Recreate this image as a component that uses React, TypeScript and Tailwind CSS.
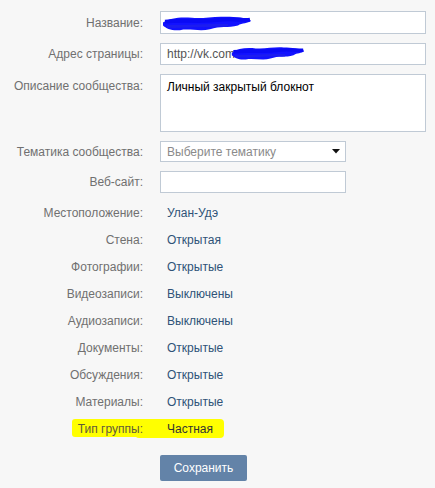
import React from 'react';

const Scribble: React.FC<{ className?: string }> = ({ className }) => (
  <svg className={className} viewBox="0 0 90 20" preserveAspectRatio="none">
    <path
      d="M1 9 C8 4, 18 3, 30 4 C42 5, 52 2, 64 3 C74 3, 84 4, 89 7 C86 10, 80 9, 76 12 C66 15, 58 12, 48 16 C38 19, 28 15, 18 17 C10 18, 4 15, 1 12 Z"
      fill="#1212ff"
    />
    <path d="M3 8 C20 6, 40 9, 60 6 C72 5, 82 7, 88 6" stroke="#0a0af5" strokeWidth="4" fill="none" />
    <path d="M5 13 C24 14, 44 11, 66 12" stroke="#1c1cf0" strokeWidth="3" fill="none" />
  </svg>
);

const infoRows: { label: string; value: string }[] = [
  { label: 'Местоположение:', value: 'Улан-Удэ' },
  { label: 'Стена:', value: 'Открытая' },
  { label: 'Фотографии:', value: 'Открытые' },
  { label: 'Видеозаписи:', value: 'Выключены' },
  { label: 'Аудиозаписи:', value: 'Выключены' },
  { label: 'Документы:', value: 'Открытые' },
  { label: 'Обсуждения:', value: 'Открытые' },
  { label: 'Материалы:', value: 'Открытые' },
];

const App: React.FC = () => {
  return (
    <div
      className="min-h-[488px] w-[435px] bg-[#f7f7f7] pt-[11px] text-[12px] leading-[14px]"
      style={{ fontFamily: '"Liberation Sans", Arial, sans-serif' }}
    >
      {/* form fields */}
      <div className="flex flex-col gap-[9px]">
        <div className="flex items-center">
          <div className="w-[143px] shrink-0 text-right text-[#707070]">Название:</div>
          <div className="relative ml-[17px] h-[23px] w-[266px] border border-[#c0cad5] bg-white">
            <Scribble className="absolute left-[1px] top-[2px] h-[19px] w-[90px]" />
          </div>
        </div>

        <div className="flex items-center">
          <div className="w-[143px] shrink-0 text-right text-[#707070]">Адрес страницы:</div>
          <div className="relative ml-[17px] flex h-[22px] w-[266px] items-center border border-[#c0cad5] bg-white pl-[6px] text-[#555]">
            http://vk.com
            <Scribble className="absolute left-[70px] top-[1px] h-[17px] w-[74px]" />
          </div>
        </div>

        <div className="flex items-start">
          <div className="w-[143px] shrink-0 pt-[5px] text-right text-[#707070]">Описание сообщества:</div>
          <div className="ml-[17px] h-[58px] w-[266px] border border-[#c0cad5] bg-white pl-[6px] pt-[5px] text-black">
            Личный закрытый блокнот
          </div>
        </div>

        <div className="flex items-center">
          <div className="w-[143px] shrink-0 text-right text-[#707070]">Тематика сообщества:</div>
          <div className="ml-[17px] flex h-[21px] w-[186px] items-center justify-between border border-[#c0cad5] bg-white pl-[6px] pr-[5px] text-[#8a8a8a]">
            <span>Выберите тематику</span>
            <svg width="8" height="5" viewBox="0 0 8 5">
              <path d="M0 0 H8 L4 4.5 Z" fill="#111" />
            </svg>
          </div>
        </div>

        <div className="flex items-center">
          <div className="w-[143px] shrink-0 text-right text-[#707070]">Веб-сайт:</div>
          <div className="ml-[17px] h-[22px] w-[186px] border border-[#c0cad5] bg-white" />
        </div>
      </div>

      {/* info rows */}
      <div className="mt-[6px] flex flex-col">
        {infoRows.map((r) => (
          <div key={r.label} className="flex h-[27px] items-center">
            <div className="w-[143px] shrink-0 text-right text-[#707070]">{r.label}</div>
            <div className="ml-[24px] text-[#2f5378]">{r.value}</div>
          </div>
        ))}
        <div className="relative flex h-[27px] items-center">
          <div className="absolute left-[72px] top-[4px] h-[18px] w-[80px] rounded-[3px] bg-[#ffff00]" />
          <div className="absolute left-[135px] top-[4px] h-[19px] w-[89px] rounded-[4px] bg-[#ffff00]" />
          <div className="relative w-[143px] shrink-0 text-right text-[#5f5a3c]">Тип группы:</div>
          <div className="relative ml-[24px] text-[#333]">Частная</div>
        </div>
      </div>

      <div className="ml-[160px] mt-[13px]">
        <button className="h-[26px] w-[87px] rounded-[2px] bg-[#6383a8] text-[12px] text-white">
          Сохранить
        </button>
      </div>
    </div>
  );
};

export default App;
